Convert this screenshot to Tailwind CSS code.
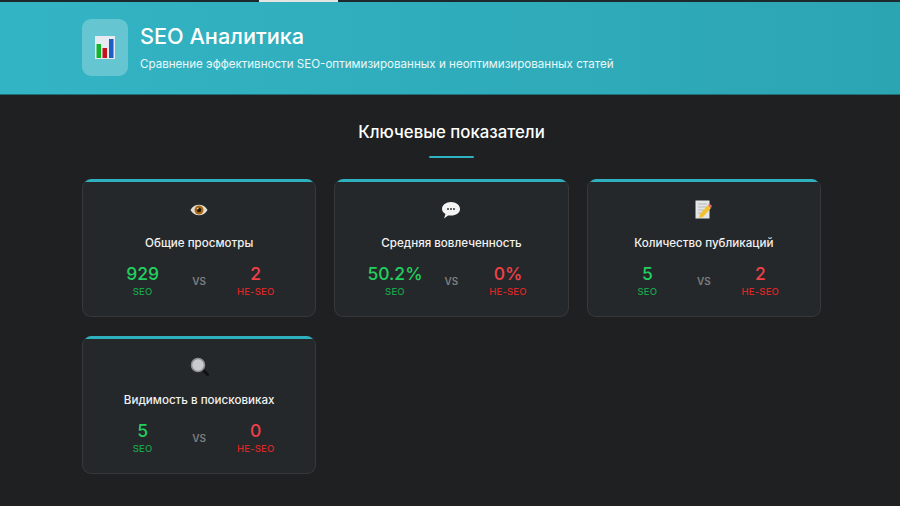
<!DOCTYPE html>
<html lang="ru">
<head>
  <meta charset="UTF-8">
  <meta name="viewport" content="width=device-width, initial-scale=1.0">
  <script src="https://cdn.jsdelivr.net/npm/@tailwindcss/browser@4"></script>
  <title>SEO Аналитика</title>
</head>
<body class="bg-[#1e2021] font-['Inter',sans-serif] h-[506px] overflow-hidden">
  <!-- top strip -->
  <div class="h-[2px] bg-[#1c2a2d] flex pl-[259px]">
    <div class="w-[79px] h-[2px] bg-[#e4e4e0]"></div>
  </div>

  <header class="h-[93px] bg-gradient-to-r from-[#33b4c4] to-[#2ca5b3] border-b border-[#1f6e78] px-[82px] pt-[17px]">
    <div class="flex items-start gap-[12px]">
      <div class="w-[46px] h-[57px] rounded-[9px] bg-white/25 flex items-center justify-center">
        <svg width="20" height="24" viewBox="0 0 20 24">
          <rect x="0" y="0" width="20" height="23" fill="#e6ebf2"/>
          <rect x="1.5" y="8" width="4.5" height="14" fill="#10b52a"/>
          <rect x="7.5" y="12" width="4.5" height="10" fill="#c4141a"/>
          <rect x="14" y="3" width="4.5" height="19" fill="#1b5fc4"/>
        </svg>
      </div>
      <div class="pt-[3px]">
        <h1 class="text-[21.7px] leading-[28px] font-medium text-white">SEO Аналитика</h1>
        <p class="mt-[5px] text-[11.6px] leading-[18px] text-white/90">Сравнение эффективности SEO-оптимизированных и неоптимизированных статей</p>
      </div>
    </div>
  </header>

  <main class="ml-[82px] w-[739px]">
    <h2 class="mt-[25px] text-center text-[16.8px] leading-[24px] font-medium text-white">Ключевые показатели</h2>
    <div class="mx-auto mt-[12px] w-[45px] h-[2px] rounded-full bg-[#2fb3c2]"></div>

    <div class="mt-[21px] grid grid-cols-3 gap-x-[18px] gap-y-[19px]">

      <div class="h-[138px] rounded-[9px] border border-white/[0.08] border-t-0 bg-[#25282a] overflow-hidden">
        <div class="h-[3px] bg-[#2fb0bf]"></div>
        <div class="h-[27px] mt-[14px] flex items-center justify-center">
          <svg width="18" height="14" viewBox="0 0 18 14">
            <path d="M0.500 7 C4 0 14 0 17.500 7 C14 14 4 14 0.500 7Z" fill="#e2ded6"/>
            <circle cx="9" cy="7" r="4.500" fill="#a8690f"/>
            <circle cx="9" cy="7" r="2.200" fill="#2a1a0a"/>
            <circle cx="7.800" cy="5.600" r="0.800" fill="#f4f0e8"/>
          </svg>
        </div>
        <h3 class="mt-[11px] text-center text-[11.6px] leading-[18px] font-medium text-[#f2f2f2]">Общие просмотры</h3>
        <div class="mt-[11px] grid grid-cols-[1fr_auto_1fr] items-center px-[10px]">
          <div class="text-center">
            <div class="text-[17.5px] leading-[22px] font-[550] text-[#22cf60]">929</div>
            <div class="text-[9.5px] leading-[14px] font-medium tracking-[0.2px] text-[#16a34a]">SEO</div>
          </div>
          <div class="text-[10px] font-semibold text-[#7c7f82]">VS</div>
          <div class="text-center">
            <div class="text-[17.5px] leading-[22px] font-[550] text-[#f04048]">2</div>
            <div class="text-[9.5px] leading-[14px] font-medium tracking-[0.2px] text-[#dc2626]">НЕ-SEO</div>
          </div>
        </div>
      </div>

      <div class="h-[138px] rounded-[9px] border border-white/[0.08] border-t-0 bg-[#25282a] overflow-hidden">
        <div class="h-[3px] bg-[#2fb0bf]"></div>
        <div class="h-[27px] mt-[14px] flex items-center justify-center">
          <svg width="18" height="18" viewBox="0 0 18 18">
            <path d="M9 1 C14 1 18 4 18 8 C18 12 14 14.500 9 14.500 L6 14.500 L2 17.500 L3.500 13 C1.500 12 0 10 0 8 C0 4 4 1 9 1Z" fill="#f4f4f4"/>
            <circle cx="6" cy="8" r="1" fill="#333"/><circle cx="9" cy="8" r="1" fill="#333"/><circle cx="12" cy="8" r="1" fill="#333"/>
          </svg>
        </div>
        <h3 class="mt-[11px] text-center text-[11.6px] leading-[18px] font-medium text-[#f2f2f2]">Средняя вовлеченность</h3>
        <div class="mt-[11px] grid grid-cols-[1fr_auto_1fr] items-center px-[10px]">
          <div class="text-center">
            <div class="text-[17.5px] leading-[22px] font-[550] text-[#22cf60]">50.2%</div>
            <div class="text-[9.5px] leading-[14px] font-medium tracking-[0.2px] text-[#16a34a]">SEO</div>
          </div>
          <div class="text-[10px] font-semibold text-[#7c7f82]">VS</div>
          <div class="text-center">
            <div class="text-[17.5px] leading-[22px] font-[550] text-[#f04048]">0%</div>
            <div class="text-[9.5px] leading-[14px] font-medium tracking-[0.2px] text-[#dc2626]">НЕ-SEO</div>
          </div>
        </div>
      </div>

      <div class="h-[138px] rounded-[9px] border border-white/[0.08] border-t-0 bg-[#25282a] overflow-hidden">
        <div class="h-[3px] bg-[#2fb0bf]"></div>
        <div class="h-[27px] mt-[14px] flex items-center justify-center">
          <svg width="17" height="19" viewBox="0 0 17 19">
            <rect x="0.500" y="0.500" width="14" height="18" fill="#e4e6e6"/>
            <path d="M3 4H12M3 7H12M3 10H9M3 13H7" stroke="#b5b8ba" stroke-width="1"/>
            <path d="M5 14 L13 5 L16 8 L8 17 L4 18Z" fill="#f2c230"/>
            <path d="M13 5 L14.500 3.500 L17 6 L16 8Z" fill="#e06a6a"/>
          </svg>
        </div>
        <h3 class="mt-[11px] text-center text-[11.6px] leading-[18px] font-medium text-[#f2f2f2]">Количество публикаций</h3>
        <div class="mt-[11px] grid grid-cols-[1fr_auto_1fr] items-center px-[10px]">
          <div class="text-center">
            <div class="text-[17.5px] leading-[22px] font-[550] text-[#22cf60]">5</div>
            <div class="text-[9.5px] leading-[14px] font-medium tracking-[0.2px] text-[#16a34a]">SEO</div>
          </div>
          <div class="text-[10px] font-semibold text-[#7c7f82]">VS</div>
          <div class="text-center">
            <div class="text-[17.5px] leading-[22px] font-[550] text-[#f04048]">2</div>
            <div class="text-[9.5px] leading-[14px] font-medium tracking-[0.2px] text-[#dc2626]">НЕ-SEO</div>
          </div>
        </div>
      </div>

      <div class="h-[138px] rounded-[9px] border border-white/[0.08] border-t-0 bg-[#25282a] overflow-hidden">
        <div class="h-[3px] bg-[#2fb0bf]"></div>
        <div class="h-[27px] mt-[14px] flex items-center justify-center">
          <svg width="19" height="19" viewBox="0 0 19 19">
            <path d="M12 12 L17.500 17.500" stroke="#111" stroke-width="3" stroke-linecap="round"/>
            <circle cx="8" cy="8" r="6.500" fill="#c9cbcc" stroke="#8d9091" stroke-width="1.500"/>
          </svg>
        </div>
        <h3 class="mt-[11px] text-center text-[11.6px] leading-[18px] font-medium text-[#f2f2f2]">Видимость в поисковиках</h3>
        <div class="mt-[11px] grid grid-cols-[1fr_auto_1fr] items-center px-[10px]">
          <div class="text-center">
            <div class="text-[17.5px] leading-[22px] font-[550] text-[#22cf60]">5</div>
            <div class="text-[9.5px] leading-[14px] font-medium tracking-[0.2px] text-[#16a34a]">SEO</div>
          </div>
          <div class="text-[10px] font-semibold text-[#7c7f82]">VS</div>
          <div class="text-center">
            <div class="text-[17.5px] leading-[22px] font-[550] text-[#f04048]">0</div>
            <div class="text-[9.5px] leading-[14px] font-medium tracking-[0.2px] text-[#dc2626]">НЕ-SEO</div>
          </div>
        </div>
      </div>

    </div>
  </main>
</body>
</html>
